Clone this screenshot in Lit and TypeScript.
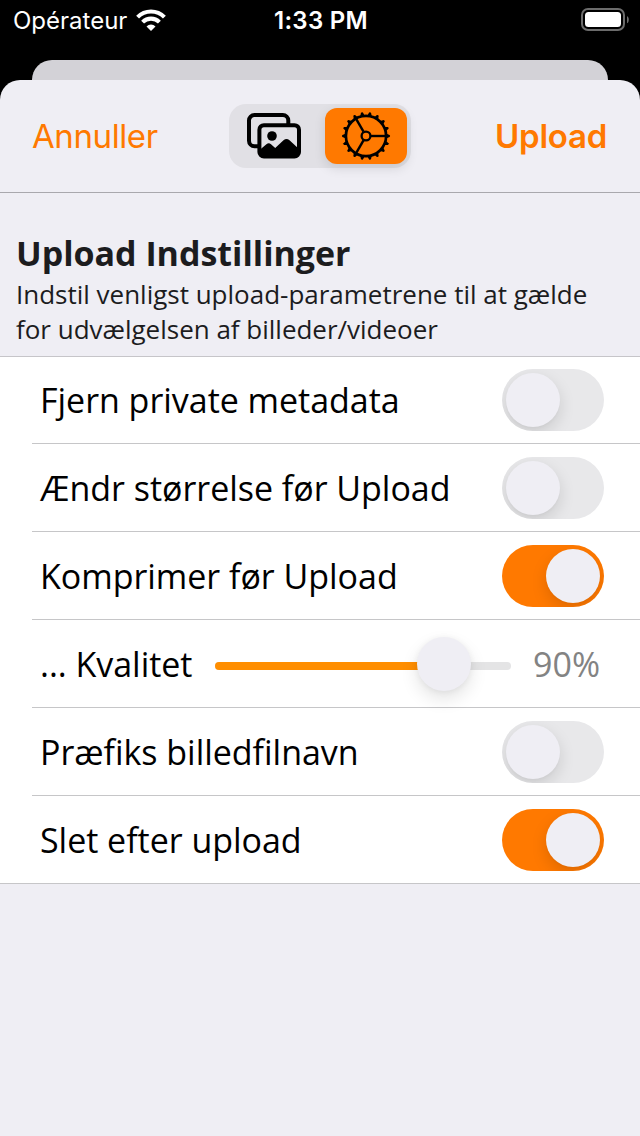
import { LitElement, html, svg, css, nothing } from "lit";
import { customElement, property, state } from "lit/decorators.js";
import { classMap } from "lit/directives/class-map.js";

@customElement("toggle-switch")
class ToggleSwitch extends LitElement {
  @property({ type: Boolean, reflect: true }) on = false;

  static styles = css`
    :host { display: block; flex: none; width: 102px; height: 62px; }
    .track {
      box-sizing: border-box; display: flex; width: 102px; height: 62px; padding: 4px;
      border-radius: 31px; background: #e8e8ea; overflow: hidden;
    }
    .track.on { background: #ff7900; justify-content: flex-end; }
    .knob {
      width: 54px; height: 54px; border-radius: 50%; background: #efeef4;
      box-shadow: 0 6px 16px rgba(0, 0, 0, 0.13), 0 2px 2px rgba(0, 0, 0, 0.02);
    }
  `;

  render() {
    return html`<div class=${classMap({ track: true, on: this.on })} role="switch" aria-checked=${this.on}
      @click=${() => (this.on = !this.on)}><div class="knob"></div></div>`;
  }
}

@customElement("quality-slider")
class QualitySlider extends LitElement {
  @property({ type: Number }) fill = 0;

  static styles = css`
    :host { display: block; position: relative; width: 296px; height: 8px; margin-top: 4px; }
    .track { height: 8px; border-radius: 4px; background: #e4e4e5; overflow: hidden; }
    .fill { height: 8px; background: #ff8e00; }
    .knob {
      position: absolute; top: -25px; margin-left: -27px;
      width: 54px; height: 54px; border-radius: 50%; background: #efeef4;
      box-shadow: 0 8px 18px rgba(0, 0, 0, 0.11), 0 1px 6px rgba(0, 0, 0, 0.06);
    }
  `;

  render() {
    return html`
      <div class="track"><div class="fill" style="width:${this.fill}px"></div></div>
      <div class="knob" style="left:${this.fill}px"></div>
    `;
  }
}

interface Setting {
  label: string;
  on?: boolean;
  slider?: boolean;
}

@customElement("app-root")
class AppRoot extends LitElement {
  @state() private settings: Setting[] = [
    { label: "Fjern private metadata", on: false },
    { label: "Ændr størrelse før Upload", on: false },
    { label: "Komprimer før Upload", on: true },
    { label: "... Kvalitet", slider: true },
    { label: "Præfiks billedfilnavn", on: false },
    { label: "Slet efter upload", on: true },
  ];

  static styles = css`
    :host {
      display: block; width: 640px; height: 1136px; overflow: hidden; background: #000;
      font-family: "Open Sans", sans-serif; color: #000;
    }
    svg { display: block; }
    .status {
      display: grid; grid-template-columns: 1fr auto 1fr; align-items: center;
      box-sizing: border-box; height: 60px; padding: 0 11px 20px 13px; color: #fff;
      font-family: Inter, sans-serif; font-size: 24px; line-height: 40px;
    }
    .carrier { display: flex; align-items: center; gap: 9px; }
    .carrier span { padding-top: 2px; line-height: 38px; }
    .time { font-weight: 600; letter-spacing: 0.3px; padding-top: 2px; line-height: 38px; }
    .battery { justify-self: end; }
    .behind { height: 20px; margin: 0 32px; border-radius: 20px 20px 0 0; background: #d3d2d7; }
    .sheet { height: 1056px; border-radius: 20px 20px 0 0; background: #efeef4; }
    .bar {
      box-sizing: border-box; display: grid; grid-template-columns: 1fr 182px 1fr; align-items: center;
      height: 113px; padding: 0 33px; border-bottom: 1px solid #a9a8ad;
      font-family: Inter, sans-serif; font-size: 33px; line-height: 40px; color: #ff7900;
    }
    .cancel { letter-spacing: -0.4px; margin-left: -1px; }
    .done { justify-self: end; font-weight: 600; letter-spacing: -0.25px; }
    .segments {
      box-sizing: border-box; display: flex; justify-content: space-between; height: 64px; padding: 4px;
      border-radius: 17px; background: #e1e0e5;
    }
    .segment { display: flex; align-items: center; justify-content: center; width: 82px; height: 56px; border-radius: 12px; }
    .segment.selected { background: #ff7900; box-shadow: 0 4px 12px rgba(0, 0, 0, 0.12); }
    .intro { box-sizing: border-box; height: 163px; padding: 37px 16px 0; color: #1c1c1e; }
    .title { font-size: 34px; line-height: 46px; margin-bottom: 1px; font-weight: 700; letter-spacing: -0.02px; }
    .hint { font-size: 26px; line-height: 35px; white-space: nowrap; letter-spacing: -0.01px; }
    .list { background: #fff; box-shadow: inset 0 1px #c6c5c9; }
    .row { height: 88px; padding-left: 32px; }
    .inner {
      box-sizing: border-box; display: flex; align-items: center; height: 88px;
      padding: 1px 36px 0 8px; border-bottom: 1px solid #c6c6c8;
    }
    .row:last-child { padding-left: 0; }
    .row:last-child .inner { padding-left: 40px; }
    .label, .value { font-size: 34px; line-height: 46px; letter-spacing: -0.03px; }
    .label { flex: 1; white-space: nowrap; }
    .value { width: 93px; padding-right: 4px; box-sizing: border-box; text-align: right; color: #838383; }
  `;

  private wifi() {
    return html`<svg width="30" height="23" viewBox="0 0 30 23">
      <g fill="none" stroke="#fff" stroke-width="4.1">
        <path d="M1.6 8.1A19 19 0 0 1 28.4 8.1"></path>
        <path d="M6.6 13.1A12 12 0 0 1 23.4 13.1"></path>
      </g>
      <path d="M10.5 17.4a6.4 6.4 0 0 1 9 0L15 22Z" fill="#fff"></path>
    </svg>`;
  }

  private battery() {
    return html`<svg class="battery" width="48" height="24" viewBox="0 0 48 24">
      <rect x="1" y="1" width="42" height="21" rx="6" fill="none" stroke="#6c6c6c" stroke-width="2"></rect>
      <rect x="4" y="4" width="36" height="15" rx="3.5" fill="#fff"></rect>
      <path d="M46 8c2.4 1.3 2.4 6 0 7.3Z" fill="#6c6c6c"></path>
    </svg>`;
  }

  private photos() {
    return html`<svg width="54" height="46" viewBox="0 0 54 46">
      <path d="M12 33.2H7.5a5.5 5.5 0 0 1-5.5-5.5V7.5A5.5 5.5 0 0 1 7.5 2h28.3a5.5 5.5 0 0 1 5.5 5.5V11"
        fill="none" stroke="#000" stroke-width="4"></path>
      <rect x="12.4" y="12.2" width="39.6" height="31.3" rx="4.5" fill="none" stroke="#000" stroke-width="4"></rect>
      <circle cx="25" cy="23" r="4.8"></circle>
      <path d="M12 37.5L19.4 31.2Q21.8 29.5 24 31.2L28.2 35L36.5 27.2Q39.5 24.6 42.5 27.2L52 36V40Q52 43.5 48 43.5H16Q12 43.5 12 40Z"></path>
    </svg>`;
  }

  private gear() {
    const teeth = Array.from({ length: 18 }, (_, i) => i * 20);
    return html`<svg width="50" height="50" viewBox="-25 -25 50 50">
      ${teeth.map((a) => svg`<path d="M20 -2.4L23.6 -1Q24.6 0 23.6 1L20 2.4Z" transform="rotate(${a})"></path>`)}
      <g fill="none" stroke="#000">
        <circle r="20.1" stroke-width="2.7"></circle>
        <circle r="4.4" stroke-width="2.3"></circle>
        ${[0, 120, 240].map((a) => svg`<path d="M5 0H19.5" stroke-width="2.4" transform="rotate(${a})"></path>`)}
      </g>
    </svg>`;
  }

  private row(s: Setting) {
    return html`<div class="row"><div class="inner">
      <div class="label">${s.label}</div>
      ${s.slider
        ? html`<quality-slider .fill=${229}></quality-slider><div class="value">90%</div>`
        : nothing}
      ${s.slider ? nothing : html`<toggle-switch ?on=${s.on}></toggle-switch>`}
    </div></div>`;
  }

  render() {
    return html`
      <div class="status">
        <div class="carrier"><span>Opérateur</span>${this.wifi()}</div>
        <div class="time">1:33 PM</div>
        ${this.battery()}
      </div>
      <div class="behind"></div>
      <div class="sheet">
        <div class="bar">
          <div class="cancel">Annuller</div>
          <div class="segments">
            <div class="segment">${this.photos()}</div>
            <div class="segment selected">${this.gear()}</div>
          </div>
          <div class="done">Upload</div>
        </div>
        <div class="intro">
          <div class="title">Upload Indstillinger</div>
          <div class="hint">Indstil venligst upload-parametrene til at gælde<br />for udvælgelsen af billeder/videoer</div>
        </div>
        <div class="list">${this.settings.map((s) => this.row(s))}</div>
      </div>
    `;
  }
}
